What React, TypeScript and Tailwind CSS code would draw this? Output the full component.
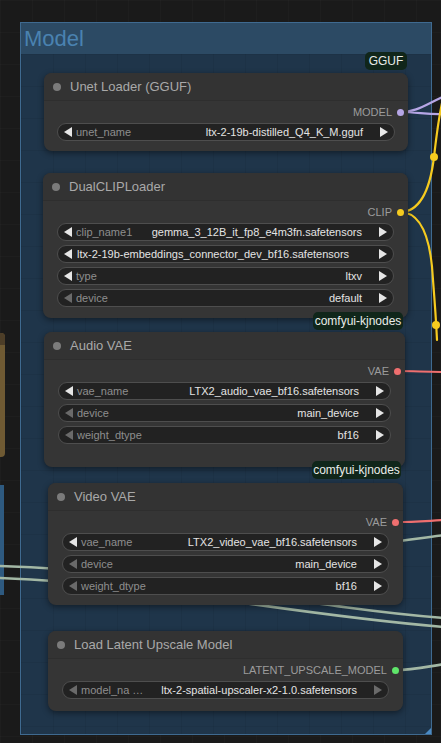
import React from "react";

type Widget = {
  label?: string;
  value: string;
  leftDim?: boolean;
  rightDim?: boolean;
};

type NodeSpec = {
  title: string;
  left: number;
  top: number;
  width: number;
  height: number;
  inset: number;
  output: { label: string; color: string };
  widgets: Widget[];
};

const FONT = { fontFamily: '"Liberation Sans", Arial, sans-serif' };

const NODES: NodeSpec[] = [
  {
    title: "Unet Loader (GGUF)",
    left: 44,
    top: 73,
    width: 364,
    height: 78,
    inset: 13,
    output: { label: "MODEL", color: "#b6a6e6" },
    widgets: [{ label: "unet_name", value: "ltx-2-19b-distilled_Q4_K_M.gguf" }],
  },
  {
    title: "DualCLIPLoader",
    left: 43,
    top: 173,
    width: 365,
    height: 145,
    inset: 14,
    output: { label: "CLIP", color: "#f6cb1f" },
    widgets: [
      { label: "clip_name1", value: "gemma_3_12B_it_fp8_e4m3fn.safetensors" },
      { value: "ltx-2-19b-embeddings_connector_dev_bf16.safetensors" },
      { label: "type", value: "ltxv" },
      { label: "device", value: "default", leftDim: true },
    ],
  },
  {
    title: "Audio VAE",
    left: 44,
    top: 332,
    width: 361,
    height: 135,
    inset: 14,
    output: { label: "VAE", color: "#ef6f6f" },
    widgets: [
      { label: "vae_name", value: "LTX2_audio_vae_bf16.safetensors" },
      { label: "device", value: "main_device", leftDim: true },
      { label: "weight_dtype", value: "bf16", leftDim: true },
    ],
  },
  {
    title: "Video VAE",
    left: 48,
    top: 483,
    width: 355,
    height: 122,
    inset: 14,
    output: { label: "VAE", color: "#ef6f6f" },
    widgets: [
      { label: "vae_name", value: "LTX2_video_vae_bf16.safetensors" },
      { label: "device", value: "main_device", leftDim: true },
      { label: "weight_dtype", value: "bf16", leftDim: true },
    ],
  },
  {
    title: "Load Latent Upscale Model",
    left: 48,
    top: 631,
    width: 355,
    height: 80,
    inset: 14,
    output: { label: "LATENT_UPSCALE_MODEL", color: "#5fe56a" },
    widgets: [
      {
        label: "model_na …",
        value: "ltx-2-spatial-upscaler-x2-1.0.safetensors",
        leftDim: true,
        rightDim: true,
      },
    ],
  },
];

function Arrow({ dir, dim }: { dir: "left" | "right"; dim?: boolean }) {
  return (
    <svg width="8" height="10" viewBox="0 0 8 10" className="shrink-0">
      <path
        d={dir === "left" ? "M8 0 L8 10 L0 5 Z" : "M0 0 L0 10 L8 5 Z"}
        fill={dim ? "#6a6a6a" : "#e6e6e6"}
      />
    </svg>
  );
}

function ComboWidget({ w }: { w: Widget }) {
  return (
    <div className="flex h-[18px] items-center rounded-full border border-[#4e4e4e] bg-[#222222] pl-[6px] pr-[6px] text-[11px] leading-none">
      <Arrow dir="left" dim={w.leftDim} />
      {w.label ? (
        <span className="ml-[4px] flex-1 whitespace-nowrap text-[#8e8e8e]">{w.label}</span>
      ) : (
        <span className="ml-[5px]" />
      )}
      <span className={"whitespace-nowrap text-[#e4e4e4] " + (w.label ? "" : "flex-1")}>{w.value}</span>
      <span className="ml-[17px]">
        <Arrow dir="right" dim={w.rightDim} />
      </span>
    </div>
  );
}

function GraphNode({ node }: { node: NodeSpec }) {
  return (
    <div
      className="absolute flex flex-col overflow-visible rounded-[8px] bg-[#353535] shadow-[0_2px_6px_rgba(0,0,0,0.45)]"
      style={{ left: node.left, top: node.top, width: node.width, height: node.height }}
    >
      <div className="flex h-[28px] items-center gap-[9px] rounded-t-[8px] border-b border-[#2e2e2e] bg-[#333333] pl-[9px]">
        <span className="h-[8px] w-[8px] rounded-full bg-[#7b7b7b]" />
        <span className="text-[13px] text-[#a9a9a9]">{node.title}</span>
      </div>
      <div className="flex h-[22px] items-center justify-end gap-[5px] pr-[4px]">
        <span className="text-[11px] text-[#9c9c9c]">{node.output.label}</span>
        <span className="h-[7px] w-[7px] rounded-full" style={{ background: node.output.color }} />
      </div>
      <div className="flex flex-col gap-[4px]" style={{ paddingLeft: node.inset, paddingRight: node.inset }}>
        {node.widgets.map((w, i) => (
          <ComboWidget key={i} w={w} />
        ))}
      </div>
    </div>
  );
}

function Badge({ text, left, top, width }: { text: string; left: number; top: number; width: number }) {
  return (
    <div
      className="absolute flex h-[18px] items-center justify-center rounded-[5px] bg-[#10261a] text-[12px] text-[#e9ece9]"
      style={{ left, top, width }}
    >
      {text}
    </div>
  );
}

// links sit above the group but under the nodes
function Links() {
  return (
    <svg className="pointer-events-none absolute left-0 top-0" width="441" height="743" viewBox="0 0 441 743">
      <g fill="none" strokeWidth="2.2" strokeLinecap="round">
        <path d="M400 112 C418 112 426 104 445 96" stroke="#b6a6e6" />
        <path d="M400 112 C418 112 428 115 445 114" stroke="#b6a6e6" />
        <path d="M400 212 C420 212 430 190 434 157 C437 130 440 105 446 88" stroke="#f6cb1f" />
        <path d="M400 212 C422 212 431 240 433 280 C435 305 436 318 437 340" stroke="#f6cb1f" />
        <path d="M397 371 C415 371 425 372 445 372" stroke="#ef6f6f" />
        <path d="M395 522 C415 522 425 521 445 520" stroke="#ef6f6f" />
      </g>
      <g fill="none" strokeWidth="2.6" strokeLinecap="round" stroke="#a3b8a5">
        <path d="M0 566 C160 570 290 606 445 618" />
        <path d="M0 578 C160 584 290 615 445 627" />
        <path d="M380 543 C405 541 420 538 445 535" />
        <path d="M395 670 C412 670 425 667 445 664" />
      </g>
      <circle cx="434" cy="157" r="4" fill="#f6cb1f" />
      <circle cx="436" cy="325" r="4" fill="#f6cb1f" />
    </svg>
  );
}

export default function App() {
  return (
    <div
      className="relative h-[743px] w-[441px] overflow-hidden bg-[#1a1a1a] bg-[linear-gradient(rgba(255,255,255,0.02)_1px,transparent_1px),linear-gradient(90deg,rgba(255,255,255,0.02)_1px,transparent_1px)] bg-[size:32px_32px]"
      style={FONT}
    >
      {/* neighbouring nodes peeking in from the left */}
      <div className="absolute left-0 top-[333px] h-[124px] w-[5px] rounded-r-[4px] bg-[#6f5a33]">
        <div className="h-[12px] rounded-tr-[4px] bg-[#4d3e28]" />
      </div>
      <div className="absolute left-0 top-[485px] h-[110px] w-[4px] bg-[#2e5a80]" />

      {/* group */}
      <div className="absolute left-[20px] top-[22px] flex h-[713px] w-[412px] flex-col border border-[#3f6a90] bg-[#1f354a]">
        <div className="flex h-[31px] items-center bg-[#2c4a64] pl-[3px] text-[22px] leading-none text-[#4a82b0]">
          Model
        </div>
        <div className="flex-1 bg-[linear-gradient(rgba(0,0,0,0.06)_1px,transparent_1px),linear-gradient(90deg,rgba(0,0,0,0.06)_1px,transparent_1px)] bg-[size:32px_32px]" />
        <div className="absolute bottom-0 right-0 h-0 w-0 border-b-[6px] border-l-[6px] border-b-[#4a8ac4] border-l-transparent" />
      </div>

      <Links />

      {NODES.map((n) => (
        <GraphNode key={n.title} node={n} />
      ))}

      <Badge text="GGUF" left={365} top={52} width={42} />
      <Badge text="comfyui-kjnodes" left={313} top={312} width={90} />
      <Badge text="comfyui-kjnodes" left={312} top={461} width={89} />
    </div>
  );
}
